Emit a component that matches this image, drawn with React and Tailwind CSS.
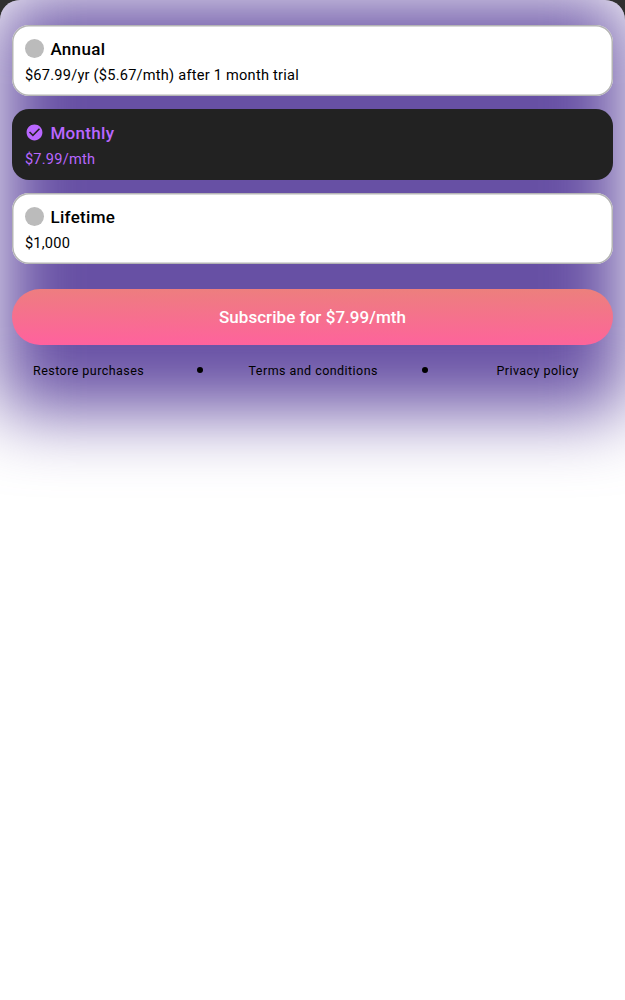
const plans = [
  { name: "Annual", price: "$67.99/yr ($5.67/mth) after 1 month trial" },
  { name: "Monthly", price: "$7.99/mth", selected: true },
  { name: "Lifetime", price: "$1,000" },
];

function CheckCircle() {
  return (
    <svg viewBox="0 0 24 24" className="size-[19px] shrink-0 fill-[#b967ff]">
      <path d="M12 2C6.48 2 2 6.48 2 12s4.48 10 10 10 10-4.48 10-10S17.52 2 12 2zm-2 15l-5-5 1.41-1.41L10 14.17l7.59-7.59L19 8l-9 9z" />
    </svg>
  );
}

function Plan({ name, price, selected }) {
  return (
    <button
      className={
        "flex h-[71px] w-full flex-col items-start rounded-[17px] pt-[12px] pl-[12.5px] text-left " +
        (selected
          ? "bg-[#222222] text-[#b967ff]"
          : "bg-white text-black shadow-[inset_0_0_0_1.5px_#b4b4b4]")
      }
    >
      <span className="flex h-[24px] items-start gap-[6.5px]">
        <span className="flex h-[23px] items-center">
          {selected ? (
            <CheckCircle />
          ) : (
            <span className="size-[19px] shrink-0 rounded-full bg-[#bbbbbb]" />
          )}
        </span>
        <span className="text-[17px] leading-[24px] font-medium tracking-[0.32px]">{name}</span>
      </span>
      <span className="mt-[4px] text-[14.6px] leading-[20px] tracking-[0.23px] whitespace-nowrap">
        {price}
      </span>
    </button>
  );
}

export default function App() {
  return (
    <div className="h-[1000px] w-[625px] bg-[#303030] font-[Roboto,sans-serif]">
      <main className="relative isolate h-full overflow-hidden rounded-t-[20px] bg-white">
        <div className="absolute inset-x-0 top-0 -z-10 h-[411px] bg-[#6750a4] blur-[36px]" />
        <div className="flex flex-col px-[12.4px] pt-[25px]">
          <div className="flex flex-col gap-[13px]">
            {plans.map((plan) => (
              <Plan key={plan.name} {...plan} />
            ))}
          </div>
          <button className="mt-[25px] h-[56px] rounded-full bg-[linear-gradient(180.6deg,#ec807c,#ff619e)] pt-[2px] text-[17px] font-medium tracking-[0.05px] text-white">
            Subscribe for $7.99/mth
          </button>
          <nav className="mt-[16px] flex h-[20px] items-center text-[12.5px] tracking-[0.45px] text-black">
            <span className="w-[151px] pl-[1.5px] text-center">Restore purchases</span>
            <span className="flex flex-1 justify-center pb-[2px]">
              <span className="size-[6px] rounded-full bg-black" />
            </span>
            <span className="w-[151px] pl-[1.5px] text-center">Terms and conditions</span>
            <span className="flex flex-1 justify-center pb-[2px]">
              <span className="size-[6px] rounded-full bg-black" />
            </span>
            <span className="w-[151px] pl-[1px] text-center">Privacy policy</span>
          </nav>
        </div>
      </main>
    </div>
  );
}
